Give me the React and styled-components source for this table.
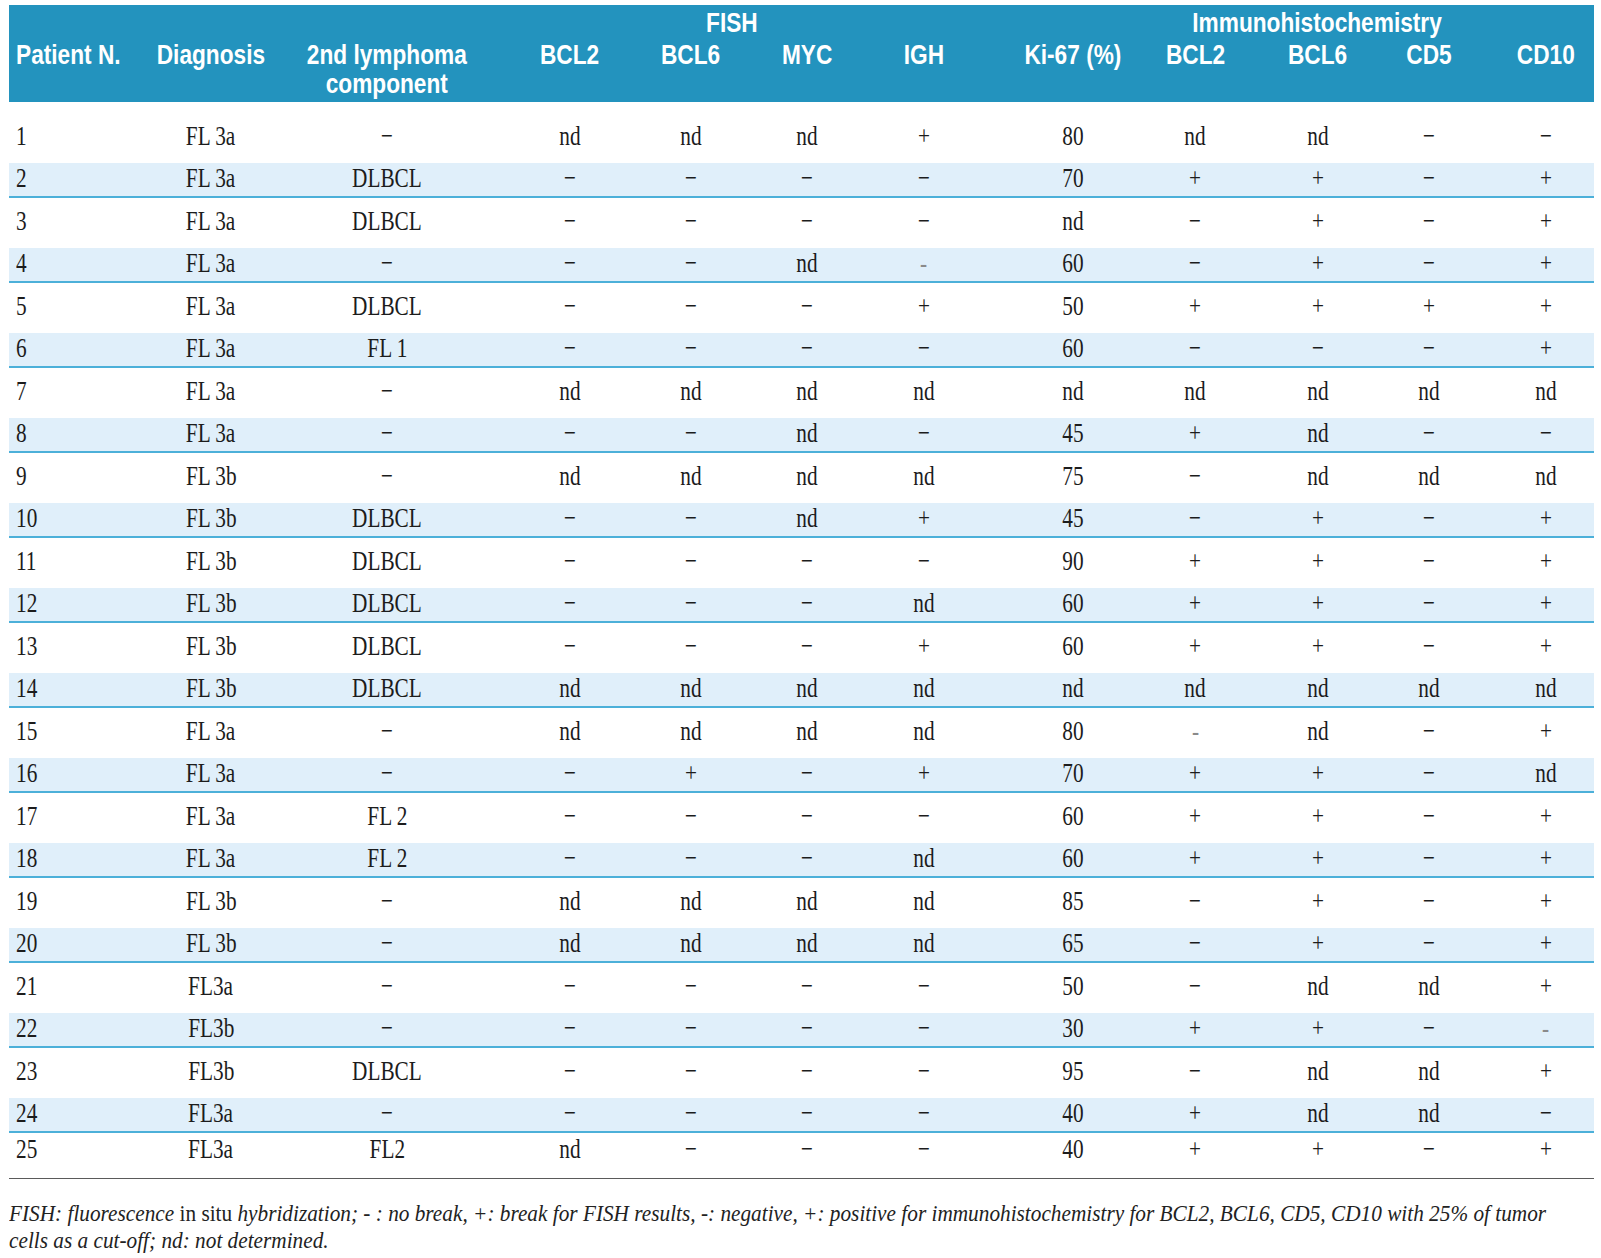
import React from "react";
import styled, { createGlobalStyle } from "styled-components";

const Global = createGlobalStyle`
  html, body { margin: 0; padding: 0; background: #fff; overflow-x: hidden; }
  body { font-family: "Liberation Serif", serif; color: #1c1c1c; }
`;

const COLS = [
  { w: 121, s: 0, left: true },
  { w: 169, s: -3.5 },
  { w: 179.5, s: -1.75 },
  { w: 152, s: 15.5 },
  { w: 118.5, s: 1 },
  { w: 116.5, s: 0 },
  { w: 133, s: -8 },
  { w: 135.5, s: 7 },
  { w: 122.5, s: 0 },
  { w: 117, s: 3 },
  { w: 114, s: -1.5 },
  { w: 106.5, s: 5 },
];
const TEMPLATE = COLS.map((c) => `${c.w}px`).join(" ");

const Page = styled.div`
  padding: 5px 0 0 9px;
  width: 1585px;
`;

const Table = styled.div`
  display: flex;
  flex-direction: column;
  width: 1585px;
`;

const Head = styled.div`
  display: grid;
  grid-template-columns: ${TEMPLATE};
  grid-template-rows: 32px auto;
  background: #2393be;
  padding: 3px 0 4px;
  box-sizing: border-box;
  height: 97px;
`;

const shiftPad = (p) =>
  p.$left
    ? "padding-left: 7px;"
    : `padding-left: ${Math.max(0, 2 * p.$shift)}px; padding-right: ${Math.max(0, -2 * p.$shift)}px;`;

const HeadCell = styled.div`
  display: flex;
  justify-content: ${(p) => (p.$left ? "flex-start" : "center")};
  align-items: flex-start;
  grid-column: ${(p) => p.$span || "auto"};
  grid-row: ${(p) => p.$row || "auto"};
  ${shiftPad}
  box-sizing: border-box;
`;

const HeadText = styled.span`
  display: inline-block;
  font-family: "Liberation Sans", Arial, sans-serif;
  font-weight: 700;
  font-size: 28px;
  line-height: 29px;
  color: #fff;
  text-align: center;
  white-space: nowrap;
  transform: scaleX(0.81);
  transform-origin: ${(p) => (p.$left ? "left center" : "center center")};
`;

const Body = styled.div`
  display: flex;
  flex-direction: column;
`;

const ROW_STYLES = {
  first: "height: 61px; padding-top: 11px; background: #fff;",
  band: "height: 35px; background: #e0effa; border-bottom: 2px solid #4cb0d9;",
  plain: "height: 50px; background: #fff;",
  last: "height: 46px; padding-bottom: 9px; background: #fff; border-bottom: 1.5px solid #5a5a5a;",
};

const Row = styled.div`
  display: grid;
  grid-template-columns: ${TEMPLATE};
  box-sizing: border-box;
  ${(p) => ROW_STYLES[p.$variant]}
`;

const Cell = styled.div`
  display: flex;
  align-items: center;
  justify-content: ${(p) => (p.$left ? "flex-start" : "center")};
  ${shiftPad}
  padding-bottom: 5px;
  box-sizing: border-box;
`;

const DataText = styled.span`
  display: inline-block;
  font-family: "Liberation Serif", "Times New Roman", serif;
  font-size: 28px;
  line-height: 30px;
  color: ${(p) => (p.$faint ? "#8a8a8a" : "#1c1c1c")};
  white-space: nowrap;
  transform: scaleX(0.76);
  transform-origin: ${(p) => (p.$left ? "left center" : "center center")};
`;

const Footnote = styled.div`
  padding-top: 21px;
  overflow: hidden;
  width: 1585px;
`;

const NoteText = styled.p`
  display: inline-block;
  margin: 0;
  font-family: "Liberation Serif", "Times New Roman", serif;
  font-style: italic;
  font-size: 23px;
  line-height: 27px;
  color: #222;
  white-space: nowrap;
  transform: scaleX(0.925);
  transform-origin: left top;
`;

const Roman = styled.span`
  font-style: normal;
`;

const HEADERS = [
  "Patient N.",
  "Diagnosis",
  ["2nd lymphoma", "component"],
  "BCL2",
  "BCL6",
  "MYC",
  "IGH",
  "Ki-67 (%)",
  "BCL2",
  "BCL6",
  "CD5",
  "CD10",
];

const D = "−";
const H = "-";
const DATA = [
  ["1", "FL 3a", D, "nd", "nd", "nd", "+", "80", "nd", "nd", D, D],
  ["2", "FL 3a", "DLBCL", D, D, D, D, "70", "+", "+", D, "+"],
  ["3", "FL 3a", "DLBCL", D, D, D, D, "nd", D, "+", D, "+"],
  ["4", "FL 3a", D, D, D, "nd", H, "60", D, "+", D, "+"],
  ["5", "FL 3a", "DLBCL", D, D, D, "+", "50", "+", "+", "+", "+"],
  ["6", "FL 3a", "FL 1", D, D, D, D, "60", D, D, D, "+"],
  ["7", "FL 3a", D, "nd", "nd", "nd", "nd", "nd", "nd", "nd", "nd", "nd"],
  ["8", "FL 3a", D, D, D, "nd", D, "45", "+", "nd", D, D],
  ["9", "FL 3b", D, "nd", "nd", "nd", "nd", "75", D, "nd", "nd", "nd"],
  ["10", "FL 3b", "DLBCL", D, D, "nd", "+", "45", D, "+", D, "+"],
  ["11", "FL 3b", "DLBCL", D, D, D, D, "90", "+", "+", D, "+"],
  ["12", "FL 3b", "DLBCL", D, D, D, "nd", "60", "+", "+", D, "+"],
  ["13", "FL 3b", "DLBCL", D, D, D, "+", "60", "+", "+", D, "+"],
  ["14", "FL 3b", "DLBCL", "nd", "nd", "nd", "nd", "nd", "nd", "nd", "nd", "nd"],
  ["15", "FL 3a", D, "nd", "nd", "nd", "nd", "80", H, "nd", D, "+"],
  ["16", "FL 3a", D, D, "+", D, "+", "70", "+", "+", D, "nd"],
  ["17", "FL 3a", "FL 2", D, D, D, D, "60", "+", "+", D, "+"],
  ["18", "FL 3a", "FL 2", D, D, D, "nd", "60", "+", "+", D, "+"],
  ["19", "FL 3b", D, "nd", "nd", "nd", "nd", "85", D, "+", D, "+"],
  ["20", "FL 3b", D, "nd", "nd", "nd", "nd", "65", D, "+", D, "+"],
  ["21", "FL3a", D, D, D, D, D, "50", D, "nd", "nd", "+"],
  ["22", "FL3b", D, D, D, D, D, "30", "+", "+", D, H],
  ["23", "FL3b", "DLBCL", D, D, D, D, "95", D, "nd", "nd", "+"],
  ["24", "FL3a", D, D, D, D, D, "40", "+", "nd", "nd", D],
  ["25", "FL3a", "FL2", "nd", D, D, D, "40", "+", "+", D, "+"],
];

function variantFor(i, n) {
  if (i === 0) return "first";
  if (i === n - 1) return "last";
  return i % 2 === 1 ? "band" : "plain";
}

export default function App() {
  return (
    <>
      <Global />
      <Page>
        <Table>
          <Head>
            <HeadCell $row="1" $span="4 / 8" $shift={-6.5}>
              <HeadText>FISH</HeadText>
            </HeadCell>
            <HeadCell $row="1" $span="8 / 13" $shift={21}>
              <HeadText>Immunohistochemistry</HeadText>
            </HeadCell>
            {HEADERS.map((h, i) => (
              <HeadCell key={i} $row="2" $left={COLS[i].left} $shift={COLS[i].s}>
                <HeadText $left={COLS[i].left}>
                  {Array.isArray(h) ? (
                    <>
                      {h[0]}
                      <br />
                      {h[1]}
                    </>
                  ) : (
                    h
                  )}
                </HeadText>
              </HeadCell>
            ))}
          </Head>
          <Body>
            {DATA.map((row, r) => (
              <Row key={r} $variant={variantFor(r, DATA.length)}>
                {row.map((v, c) => (
                  <Cell key={c} $left={COLS[c].left} $shift={COLS[c].s}>
                    <DataText $left={COLS[c].left} $faint={v === H}>
                      {v}
                    </DataText>
                  </Cell>
                ))}
              </Row>
            ))}
          </Body>
        </Table>
        <Footnote>
          <NoteText>
            FISH: fluorescence <Roman>in situ</Roman> hybridization; - : no break, +: break for FISH
            results, -: negative, +: positive for immunohistochemistry for BCL2, BCL6, CD5, CD10 with
            25% of tumor
            <br />
            cells as a cut-off; nd: not determined.
          </NoteText>
        </Footnote>
      </Page>
    </>
  );
}
